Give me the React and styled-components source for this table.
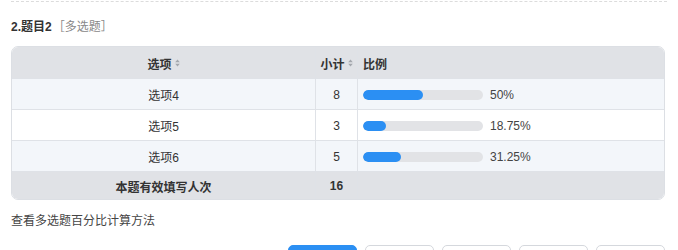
import React from "react";
import styled, { createGlobalStyle } from "styled-components";

const Global = createGlobalStyle`
  html, body { margin: 0; padding: 0; background: #fff; }
  body {
    font-family: "Liberation Sans", "Noto Sans CJK SC", sans-serif;
    color: #333;
    font-size: 12px;
  }
`;

const Page = styled.div`
  width: 678px;
  height: 250px;
  overflow: hidden;
  padding: 0 13px 0 11px;
  box-sizing: border-box;
`;

const Divider = styled.div`
  height: 0;
  border-top: 1px dashed #dcdcdc;
  margin: 1px -2px 0 0;
`;

const Title = styled.div`
  margin-top: 17px;
  height: 16px;
  line-height: 16px;
  font-size: 12px;
  font-weight: bold;
  color: #333;
`;

const Kind = styled.span`
  font-weight: normal;
  color: #888;
  margin-left: 1px;
`;

const Table = styled.div`
  margin-top: 11px;
  border: 1px solid #dcdfe4;
  border-radius: 7px;
  overflow: hidden;
  display: grid;
  grid-template-columns: 303px 42px 1fr;
`;

const Cell = styled.div`
  height: ${(p) => p.$h || 31}px;
  display: flex;
  align-items: center;
  justify-content: ${(p) => (p.$center ? "center" : "flex-start")};
  padding: ${(p) => (p.$center ? "1px 0 0" : "1px 5px 0")};
  box-sizing: border-box;
  background: ${(p) => p.$bg};
  border-top: ${(p) => (p.$first ? "none" : "1px solid #dfe2e7")};
  border-left: ${(p) => (p.$lead ? "none" : "1px solid #dfe2e7")};
  font-weight: ${(p) => (p.$bold ? "bold" : "normal")};
  font-size: 12px;
  color: #333;
  white-space: nowrap;
`;

const Sort = styled.svg`
  width: 5px;
  height: 8px;
  margin-left: 3px;
`;

const SortIcon = () => (
  <Sort viewBox="0 0 5 8">
    <path d="M2.5 0.5 L4.8 3.2 L0.2 3.2 Z" fill="#a3a7ad" />
    <path d="M2.5 7.5 L4.8 4.8 L0.2 4.8 Z" fill="#a3a7ad" />
  </Sort>
);

const Track = styled.div`
  width: 120px;
  height: 10px;
  border-radius: 5px;
  background: #e2e3e6;
  overflow: hidden;
  flex: none;
`;

const Fill = styled.div`
  height: 100%;
  border-radius: 5px;
  background: #2b8ff3;
`;

const Pct = styled.span`
  margin-left: 7px;
  font-size: 12px;
  color: #444;
`;

const Note = styled.div`
  margin-top: 13px;
  font-size: 12px;
  color: #444;
  height: 16px;
  line-height: 16px;
`;

const Buttons = styled.div`
  margin-top: 16px;
  display: flex;
  justify-content: flex-end;
  gap: 8px;
`;

const Btn = styled.div`
  width: 69px;
  height: 28px;
  border-radius: 5px;
  box-sizing: border-box;
  border: 1px solid ${(p) => (p.$primary ? "#2b8ff3" : "#d5d8dd")};
  background: ${(p) => (p.$primary ? "#2b8ff3" : "#fff")};
`;

const rows = [
  { name: "选项4", n: 8, pct: 50, label: "50%" },
  { name: "选项5", n: 3, pct: 18.75, label: "18.75%" },
  { name: "选项6", n: 5, pct: 31.25, label: "31.25%" },
];

const HEAD = "#e0e2e6";

export default function App() {
  return (
    <>
      <Global />
      <Page>
        <Divider />
        <Title>
          2.题目2<Kind>［多选题］</Kind>
        </Title>
        <Table>
          <Cell $lead $first $center $bg={HEAD} $bold>
            选项<SortIcon />
          </Cell>
          <Cell $first $center $bg={HEAD} $bold>
            小计<SortIcon />
          </Cell>
          <Cell $first $bg={HEAD} $bold>
            比例
          </Cell>
          {rows.map((r, i) => {
            const bg = i % 2 === 0 ? "#f3f6fa" : "#fff";
            return (
              <React.Fragment key={r.name}>
                <Cell $lead $center $bg={bg}>
                  {r.name}
                </Cell>
                <Cell $center $bg={bg}>
                  {r.n}
                </Cell>
                <Cell $bg={bg}>
                  <Track>
                    <Fill style={{ width: `${r.pct}%` }} />
                  </Track>
                  <Pct>{r.label}</Pct>
                </Cell>
              </React.Fragment>
            );
          })}
          <Cell $lead $center $bg={HEAD} $bold $h={28}>
            本题有效填写人次
          </Cell>
          <Cell $center $bg={HEAD} $bold $h={28}>
            16
          </Cell>
          <Cell $bg={HEAD} $h={28} />
        </Table>
        <Note>查看多选题百分比计算方法</Note>
        <Buttons>
          <Btn $primary />
          <Btn />
          <Btn />
          <Btn />
          <Btn />
        </Buttons>
      </Page>
    </>
  );
}
